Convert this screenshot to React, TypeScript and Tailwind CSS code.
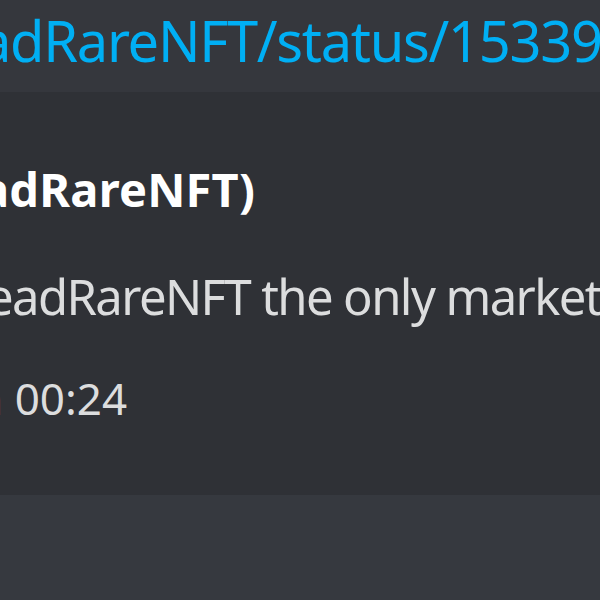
export default function App() {
  return (
    <div
      className="w-[600px] h-[600px] overflow-hidden bg-[#36393f] flex flex-col"
      style={{ fontFamily: '"Noto Sans", "Open Sans", sans-serif' }}
    >
      {/* message link */}
      <div className="h-[92px] shrink-0 bg-[#35373d] overflow-hidden">
        <div className="pt-[2px] ml-[-20px] whitespace-nowrap text-[56px] leading-[76px] tracking-[-1.3px] text-[#00aff4]">
          adRareNFT/status/1533900412
        </div>
      </div>

      {/* embed */}
      <div className="h-[403px] shrink-0 bg-[#2f3136] overflow-hidden flex flex-col">
        <div className="pt-[65px] ml-[-19px] whitespace-nowrap text-[47px] leading-[64px] tracking-[0.2px] font-bold text-white">
          adRareNFT)
        </div>
        <div className="mt-[42px] ml-[-14px] whitespace-nowrap text-[49px] leading-[66px] tracking-[-1.6px] text-[#dcddde]">
          eadRareNFT the only marketplace
        </div>
        <div className="mt-[39px] ml-[-24px] whitespace-nowrap text-[44px] leading-[60px] text-[#dcddde]">
          n 00:24
        </div>
      </div>

      <div className="flex-1 bg-[#36393f]" />
    </div>
  );
}
